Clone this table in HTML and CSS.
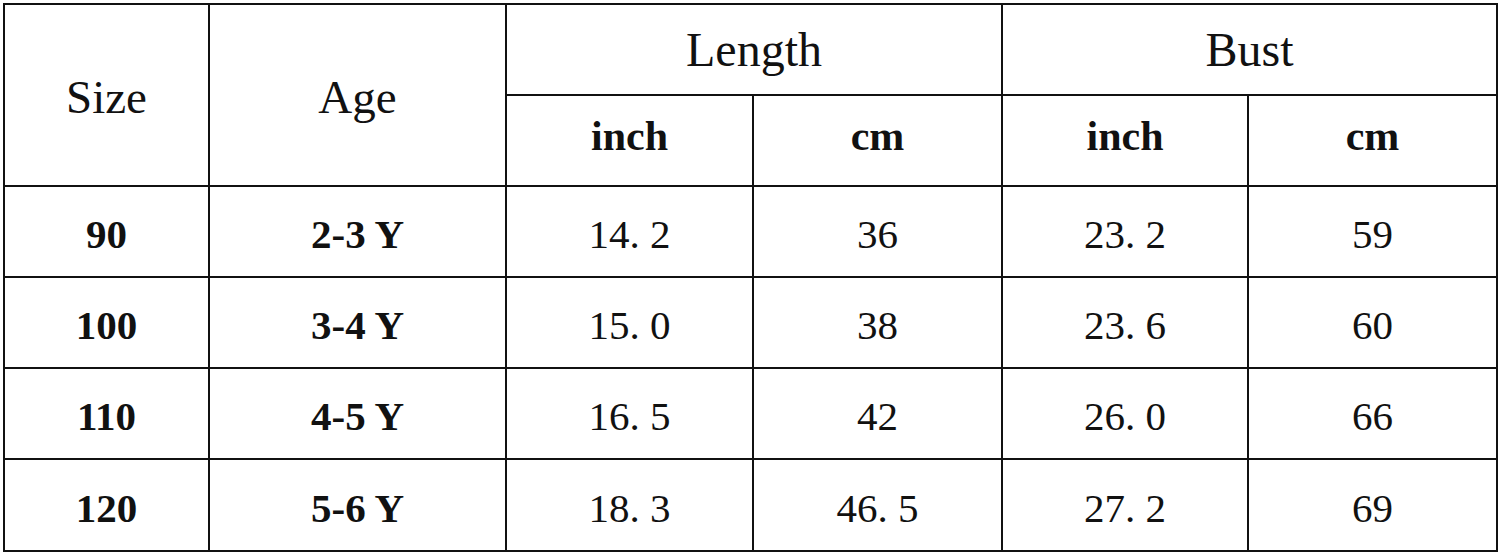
FILE: index.html
```html
<!DOCTYPE html>
<html>
<head>
<meta charset="utf-8">
<link rel="stylesheet" href="styles.css">
</head>
<body>
<table class="size-chart">
  <colgroup>
    <col class="c-size"><col class="c-age"><col class="c-len-in"><col class="c-len-cm"><col class="c-bust-in"><col class="c-bust-cm">
  </colgroup>
  <tr class="row">
    <th rowspan="2" class="head tall">Size</th>
    <th rowspan="2" class="head tall">Age</th>
    <th colspan="2" class="head">Length</th>
    <th colspan="2" class="head">Bust</th>
  </tr>
  <tr class="row">
    <th class="unit">inch</th>
    <th class="unit">cm</th>
    <th class="unit">inch</th>
    <th class="unit">cm</th>
  </tr>
  <tr class="row">
    <td class="bold">90</td><td class="bold">2-3 Y</td><td class="num">14.&nbsp;2</td><td class="num">36</td><td class="num">23.&nbsp;2</td><td class="num">59</td>
  </tr>
  <tr class="row">
    <td class="bold">100</td><td class="bold">3-4 Y</td><td class="num">15.&nbsp;0</td><td class="num">38</td><td class="num">23.&nbsp;6</td><td class="num">60</td>
  </tr>
  <tr class="row">
    <td class="bold">110</td><td class="bold">4-5 Y</td><td class="num">16.&nbsp;5</td><td class="num">42</td><td class="num">26.&nbsp;0</td><td class="num">66</td>
  </tr>
  <tr class="row last">
    <td class="bold">120</td><td class="bold">5-6 Y</td><td class="num">18.&nbsp;3</td><td class="num">46.&nbsp;5</td><td class="num">27.&nbsp;2</td><td class="num">69</td>
  </tr>
</table>
</body>
</html>
```
FILE: styles.css
```css
html, body {
  margin: 0;
  padding: 0;
  background: #ffffff;
}
body {
  padding: 3px;
}
.size-chart {
  border-collapse: collapse;
  table-layout: fixed;
  width: 1493px;
  font-family: "Liberation Serif", "Times New Roman", serif;
  color: #111;
}
.c-size { width: 205px; }
.c-age { width: 297px; }
.c-len-in { width: 247px; }
.c-len-cm { width: 249px; }
.c-bust-in { width: 246px; }
.c-bust-cm { width: 249px; }
.size-chart th,
.size-chart td {
  border: 2px solid #111;
  text-align: center;
  vertical-align: middle;
  padding: 0;
  line-height: 1;
}
.row { height: 91px; }
.row.last { height: 92px; }
.head {
  font-weight: normal;
  font-size: 48px;
}
.size-chart .tall {
  font-size: 47px;
  padding-top: 4px;
}
.size-chart .unit {
  font-weight: bold;
  font-size: 42px;
  padding-bottom: 10px;
}
.size-chart .bold {
  font-weight: bold;
  font-size: 41px;
  padding-top: 6px;
}
.size-chart .num {
  font-weight: normal;
  font-size: 41px;
  padding-top: 6px;
}
```
